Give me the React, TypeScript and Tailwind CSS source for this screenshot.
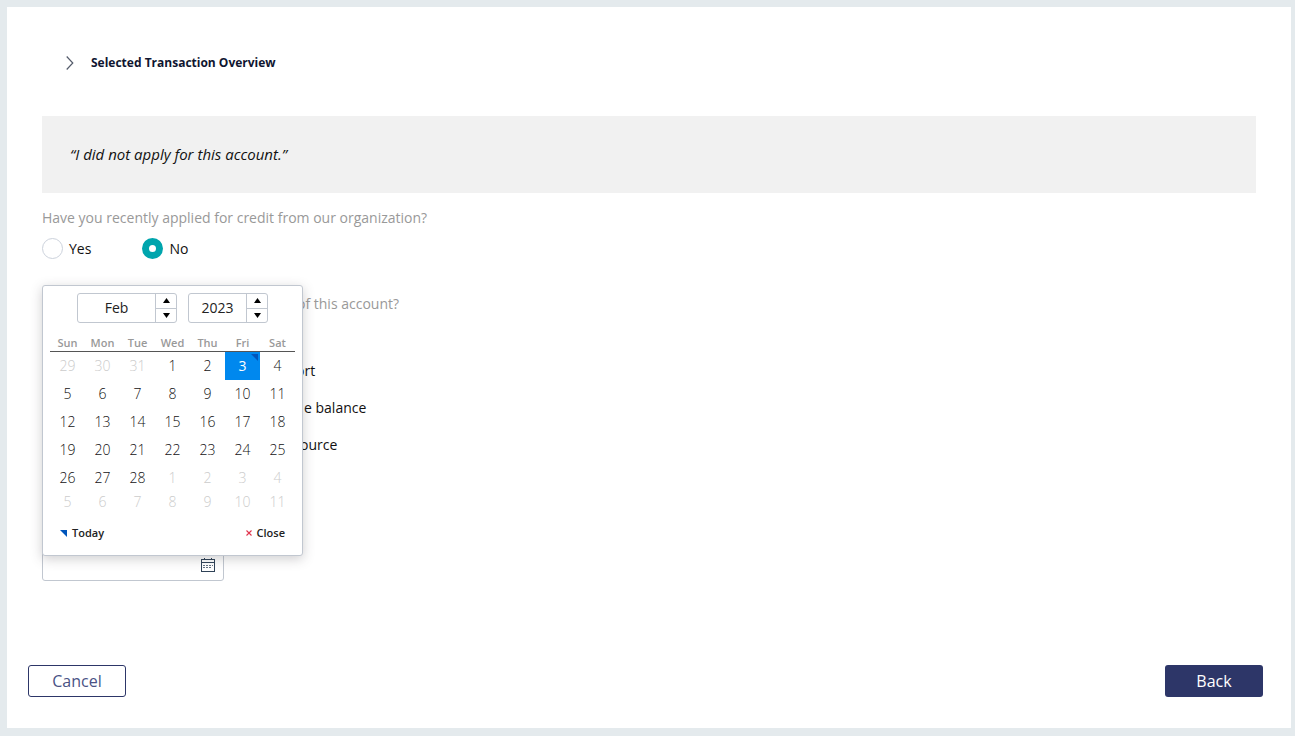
import React, { useState } from 'react';

const weekDays = ['Sun', 'Mon', 'Tue', 'Wed', 'Thu', 'Fri', 'Sat'];

const weeks = [
  [29, 30, 31, 1, 2, 3, 4],
  [5, 6, 7, 8, 9, 10, 11],
  [12, 13, 14, 15, 16, 17, 18],
  [19, 20, 21, 22, 23, 24, 25],
  [26, 27, 28, 1, 2, 3, 4],
  [5, 6, 7, 8, 9, 10, 11],
];

const months = ['Jan', 'Feb', 'Mar', 'Apr', 'May', 'Jun', 'Jul', 'Aug', 'Sep', 'Oct', 'Nov', 'Dec'];

const isOutside = (row: number, day: number) => (row === 0 && day > 20) || (row === 4 && day < 10) || row === 5;

interface SpinnerProps {
  label: string;
  value: string | number;
  className: string;
  onStep: (step: number) => void;
}

const Spinner: React.FC<SpinnerProps> = ({ label, value, className, onStep }) => (
  <div className={`flex h-[30px] overflow-hidden rounded-[3px] border border-[#c1c7d0] bg-white ${className}`}>
    <input
      aria-label={label}
      value={value}
      readOnly
      className="w-0 min-w-0 flex-1 text-center text-sm text-[#222] outline-none"
    />
    <div className="flex w-[21px] flex-col border-l border-[#c1c7d0]">
      <button
        aria-label={`Next ${label}`}
        onClick={() => onStep(1)}
        className="flex flex-1 items-center justify-center border-b border-[#c1c7d0]"
      >
        <svg width="7" height="5" viewBox="0 0 7 5"><path d="M3.5 0L7 5H0z" /></svg>
      </button>
      <button
        aria-label={`Previous ${label}`}
        onClick={() => onStep(-1)}
        className="flex flex-1 items-center justify-center"
      >
        <svg width="7" height="5" viewBox="0 0 7 5"><path d="M0 0h7L3.5 5z" /></svg>
      </button>
    </div>
  </div>
);

const DatePicker: React.FC<{ onClose: () => void }> = ({ onClose }) => {
  const [month, setMonth] = useState(1);
  const [year, setYear] = useState(2023);
  const [selected, setSelected] = useState('0-5');

  return (
    <div
      role="dialog"
      aria-label="Choose date"
      className="absolute bottom-6 -left-px w-[261px] rounded-[3px] border border-[#c1c7d0] bg-white px-[7px] pt-[7px] pb-[14px] shadow-[0_3px_12px_rgba(64,60,67,0.25)]"
    >
      <div className="flex justify-center gap-[11px]">
        <Spinner
          label="month"
          value={months[month]}
          className="w-[100px]"
          onStep={(step) => setMonth((month + step + 12) % 12)}
        />
        <Spinner label="year" value={year} className="w-[80px]" onStep={(step) => setYear(year + step)} />
      </div>

      <table className="mt-3 w-full table-fixed border-collapse text-center">
        <thead>
          <tr className="border-b border-[#555]">
            {weekDays.map((day) => (
              <th key={day} className="h-4 p-0 text-[11px] leading-4 font-semibold text-[#999]">{day}</th>
            ))}
          </tr>
        </thead>
        <tbody>
          {weeks.map((week, row) => (
            <tr key={row}>
              {week.map((day, col) => {
                const id = `${row}-${col}`;
                const active = id === selected;
                const color = active
                  ? 'bg-[#0088ee] font-normal text-white'
                  : isOutside(row, day)
                    ? 'font-light text-[#ccc]'
                    : 'font-light text-[#111]';
                return (
                  <td key={id} className="p-0">
                    <button
                      onClick={() => setSelected(id)}
                      className={`relative block w-full text-sm ${row === 5 ? 'h-5 leading-5' : 'h-7 leading-7'} ${color}`}
                    >
                      {day}
                      {/* Corner marker for today's date */}
                      {id === '0-5' && (
                        <svg className="absolute top-[2px] right-[2px]" width="7" height="7" viewBox="0 0 7 7">
                          <path d="M0 0h7v7z" fill="#0055bb" />
                        </svg>
                      )}
                    </button>
                  </td>
                );
              })}
            </tr>
          ))}
        </tbody>
      </table>

      <div className="mt-[13px] flex justify-between px-[10px] text-[11px] leading-4 font-semibold text-[#222]">
        <button onClick={() => setSelected('0-5')} className="flex items-center gap-[5px]">
          <svg width="7" height="7" viewBox="0 0 7 7"><path d="M0 0h7v7z" fill="#0055bb" /></svg>
          Today
        </button>
        <button onClick={onClose} className="flex items-center gap-[5px]">
          <svg width="6" height="6" viewBox="0 0 6 6" stroke="#e0334c" strokeWidth="1.1">
            <path d="M.5 .5l5 5M5.5 .5l-5 5" />
          </svg>
          Close
        </button>
      </div>
    </div>
  );
};

const CalendarIcon: React.FC = () => (
  <svg width="14" height="14" viewBox="0 0 14 14" fill="none" stroke="#2f4257" shapeRendering="crispEdges">
    <path d="M.5 1.5h13v12H.5zM0 4.5h14M3.5 0v2M10.5 0v2" />
    <path d="M2 7.5h10M2 9.5h8" strokeDasharray="2 1" strokeOpacity=".75" />
  </svg>
);

const App: React.FC = () => {
  const [applied, setApplied] = useState('No');
  const [open, setOpen] = useState(true);

  return (
    <div className="flex min-h-screen bg-[#e4eaed] pt-[7px] pr-1 pb-2 pl-[7px] font-['Open_Sans',sans-serif] text-sm leading-5 text-[#111]">
      <div className="flex flex-1 flex-col bg-white pb-[31px]">
        <main className="px-[35px] pt-[46px]">
          <button className="ml-6 flex items-center gap-[17px] text-xs leading-5 font-bold text-[#0f1530]">
            <svg width="8" height="14" viewBox="0 0 8 14" fill="none" stroke="#555c6b" strokeWidth="1.2">
              <path d="M.7 .5L6.8 7 .7 13.5" />
            </svg>
            Selected Transaction Overview
          </button>

          <blockquote className="mt-[43px] bg-[#f1f1f1] px-7 py-7 text-[15px] leading-[21px] italic">
            “I did not apply for this account.”
          </blockquote>

          <fieldset className="mt-[15px]">
            <legend className="text-[#999]">Have you recently applied for credit from our organization?</legend>
            <div className="mt-[10px] flex gap-[51px]">
              {['Yes', 'No'].map((option) => (
                <label key={option} className="flex items-center gap-[6px]">
                  <input
                    type="radio"
                    name="applied"
                    checked={applied === option}
                    onChange={() => setApplied(option)}
                    className="size-[21px] appearance-none rounded-full border border-[#ccd2dc] bg-white checked:border-[7px] checked:border-[#00a5ad]"
                  />
                  {option}
                </label>
              ))}
            </div>
          </fieldset>

          <p className="mt-[35px] pl-[255px] text-[#999]">of this account?</p>
          <ul className="mt-[47px] flex flex-col gap-[17px] pl-[254px]">
            <li>ort</li>
            <li className="pl-2">e balance</li>
            <li className="pl-1">ource</li>
          </ul>

          <div className="relative mt-[94px] flex h-8 w-[182px] items-center rounded-[3px] border border-[#c1c7d0] pr-2">
            <input aria-label="Date" className="h-full w-0 min-w-0 flex-1 px-2 outline-none" />
            <button aria-label="Open calendar" onClick={() => setOpen(!open)}>
              <CalendarIcon />
            </button>
            {open && <DatePicker onClose={() => setOpen(false)} />}
          </div>
        </main>

        <footer className="mt-auto flex justify-between pr-7 pl-[21px] text-base">
          <button className="h-8 w-[98px] rounded-[3px] border border-[#2d3668] bg-white text-[#4a5285]">Cancel</button>
          <button className="h-8 w-[98px] rounded-[3px] bg-[#2d3668] text-white">Back</button>
        </footer>
      </div>
    </div>
  );
};

export default App;
